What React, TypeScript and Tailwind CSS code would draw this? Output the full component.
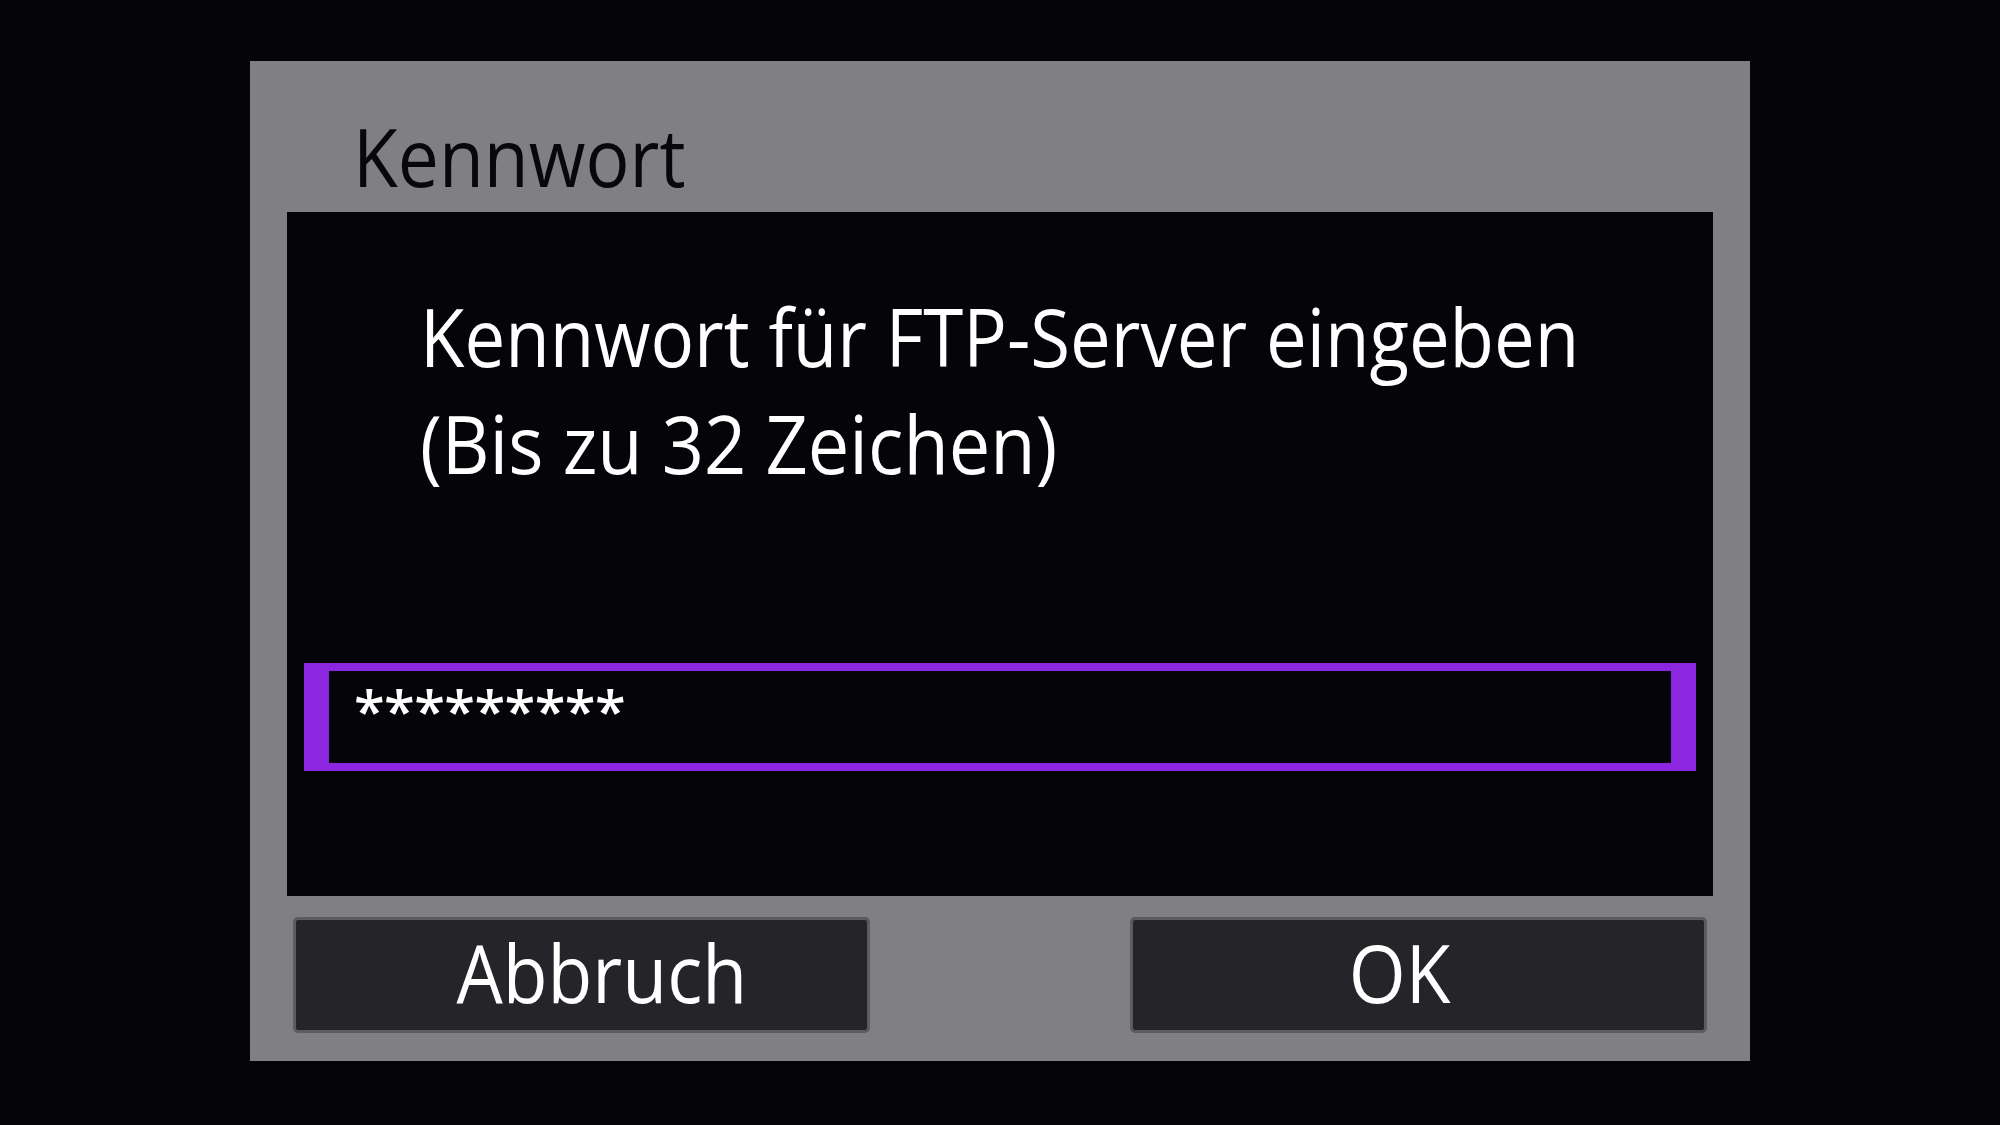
export default function App() {
  return (
    <div
      className="w-[2000px] h-[1125px] bg-[#050408] flex justify-center pt-[61px]"
      style={{ fontFamily: '"Open Sans", "Noto Sans", sans-serif' }}
    >
      <div className="w-[1500px] h-[1000px] bg-[#807f84] flex flex-col px-[37px]">
        <div className="h-[151px] pt-[55px] pl-[66px]">
          <div className="inline-block origin-left scale-x-[0.915] text-[80px] leading-[80px] text-[#08070b]">Kennwort</div>
        </div>
        <div className="h-[684px] bg-[#050408] flex flex-col px-[17px]">
          <div className="pt-[70px] pl-[116px] text-white text-[80px] leading-[107px]">
            <div className="origin-left scale-x-[0.907] whitespace-nowrap">Kennwort für FTP-Server eingeben</div>
            <div className="origin-left scale-x-[0.924] whitespace-nowrap">(Bis zu 32 Zeichen)</div>
          </div>
          <div className="mt-[167px] h-[108px] border-y-[8px] border-x-[25px] border-[#8c26e0] bg-[#050408] pl-[25px] pt-[10px]">
            <div className="text-white text-[56px] leading-[56px] font-semibold tracking-[-0.01em]">*********</div>
          </div>
        </div>
        <div className="flex justify-between px-[6px] pt-[21px]">
          <div className="w-[577px] h-[116px] rounded-[5px] border-[3px] border-[#5c5b60] bg-[#252428] flex justify-center pl-[40px] pt-[12px]">
            <span className="inline-block scale-x-[0.915] text-white text-[80px] leading-[80px]">Abbruch</span>
          </div>
          <div className="w-[577px] h-[116px] rounded-[5px] border-[3px] border-[#5c5b60] bg-[#252428] flex justify-center pr-[38px] pt-[12px]">
            <span className="inline-block scale-x-[0.915] text-white text-[80px] leading-[80px]">OK</span>
          </div>
        </div>
      </div>
    </div>
  );
}
